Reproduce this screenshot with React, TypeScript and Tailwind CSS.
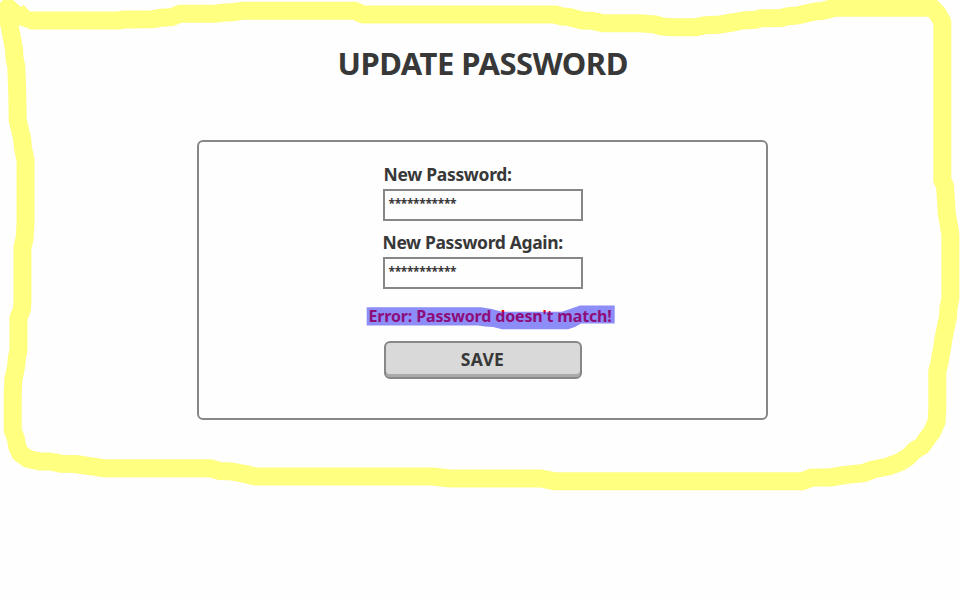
import React from "react";

function PasswordField({ label, className, labelClass }: { label: string; className: string; labelClass: string }) {
  return (
    <label className={`block w-[200px] ${className}`}>
      <span className={`block h-7 whitespace-nowrap text-[17.5px] leading-[26px] ${labelClass}`}>{label}</span>
      <span className="flex h-8 w-[200px] items-start border-2 border-[#878787] pl-1 pt-[3px] text-[12px] leading-5 tracking-[-0.35px]">
        ***********
      </span>
    </label>
  );
}

function MarkerOutline() {
  return (
    <svg className="pointer-events-none absolute inset-0" width="960" height="600" viewBox="0 0 960 600">
      <path d="M0 3L3 0H13L21 7L23.5 4.8L30 11.7L30 29L20 25.5L1 27L0 25Z" fill="#ffff80" />
      <path
        fill="none"
        stroke="#ffff80"
        strokeWidth="18"
        strokeLinejoin="round"
        d="M29 20.5H118L125 19.5L153 19.2L162 17.7L172 17L180 13.7H215L222 12.8L235 12L242 10.8H355L363 14.5H555L562 16.5L568 16.7L582 20.5L592 20.7L603 23.3H640L655 24.5L662 26.5L672 27.3H696L705 25.3L718 24.8L735 22L743 20.5L755 19.8L762 18.2L781 18L788 16.3L797 15.5L815 11.5L822 11L835 7.7H932L938 14L942.3 22V180L945 186L946 200L946.7 213L949 226L950.4 235V298L948.5 308L948 317L945 331L943 341L942.5 346L940.7 355L939.5 363L937.3 371V410L936.5 422L932 432L926 440L922 446L915 450L908 457L900 462L888 466.5L873 469.5L864 473L845 475L830 477.5H812L802 481.3H555L541 478.5H450L433 476.5H255L245 474L232 471.5L220 471L210 468.3H105L75 464L62 463.8L50 461.5H40L28 459L20 453L17 446L16 439L12.7 430V395L13.3 380L16 367L17 357L18.5 350V318L22 309L22.5 300V247L24.5 239L25.5 224V160L23 148L22 138L17.7 120L17.3 95L16.3 67L14.5 58L14 49L10 28L8 15"
      />
    </svg>
  );
}

export default function App() {
  return (
    <div className="relative h-[600px] w-[960px] overflow-hidden bg-[#fefefe] font-['Noto_Sans',sans-serif] font-bold text-[#383838]">
      <main className="flex flex-col items-center pl-[5px]">
        <h1 className="mt-11 h-10 w-[290px] whitespace-nowrap text-[31px] leading-[38px] tracking-[-0.5px]">UPDATE PASSWORD</h1>
        <form className="mt-14 flex h-[280px] w-[571px] flex-col items-center rounded-[6px] border-2 border-[#878787]">
          <PasswordField label="New Password:" className="mt-[19px]" labelClass="pl-px tracking-[-0.3px]" />
          <PasswordField label="New Password Again:" className="mt-2" labelClass="tracking-[-0.35px]" />
          <p className="ml-4 mt-[13px] h-7 w-[246px] whitespace-nowrap pl-px text-[16px] leading-7 tracking-[-0.15px] text-[#ff0000]">
            Error: Password doesn't match!
          </p>
          <button
            type="button"
            className="mt-[11px] h-[38px] w-[198px] rounded-[6px] border-2 border-[#878787] bg-[#d9d9d9] pb-0.5 text-[17.5px] leading-8 tracking-[0.3px] shadow-[inset_0_-3px_0_#aaaaaa]"
          >
            SAVE
          </button>
        </form>
      </main>
      <MarkerOutline />
      <svg className="pointer-events-none absolute left-[366px] top-[305px]" width="250" height="26" viewBox="366 305 250 26">
        <path
          d="M366.7 307.3H481L491.7 309L502 311.7H562L570 309L580 305.5H614.7V323.5H581L575 327L568 329.3H502L493 327L485 326.5L478 325.5H366.7Z"
          fill="#1c1cf0"
          fillOpacity=".5"
        />
      </svg>
    </div>
  );
}
